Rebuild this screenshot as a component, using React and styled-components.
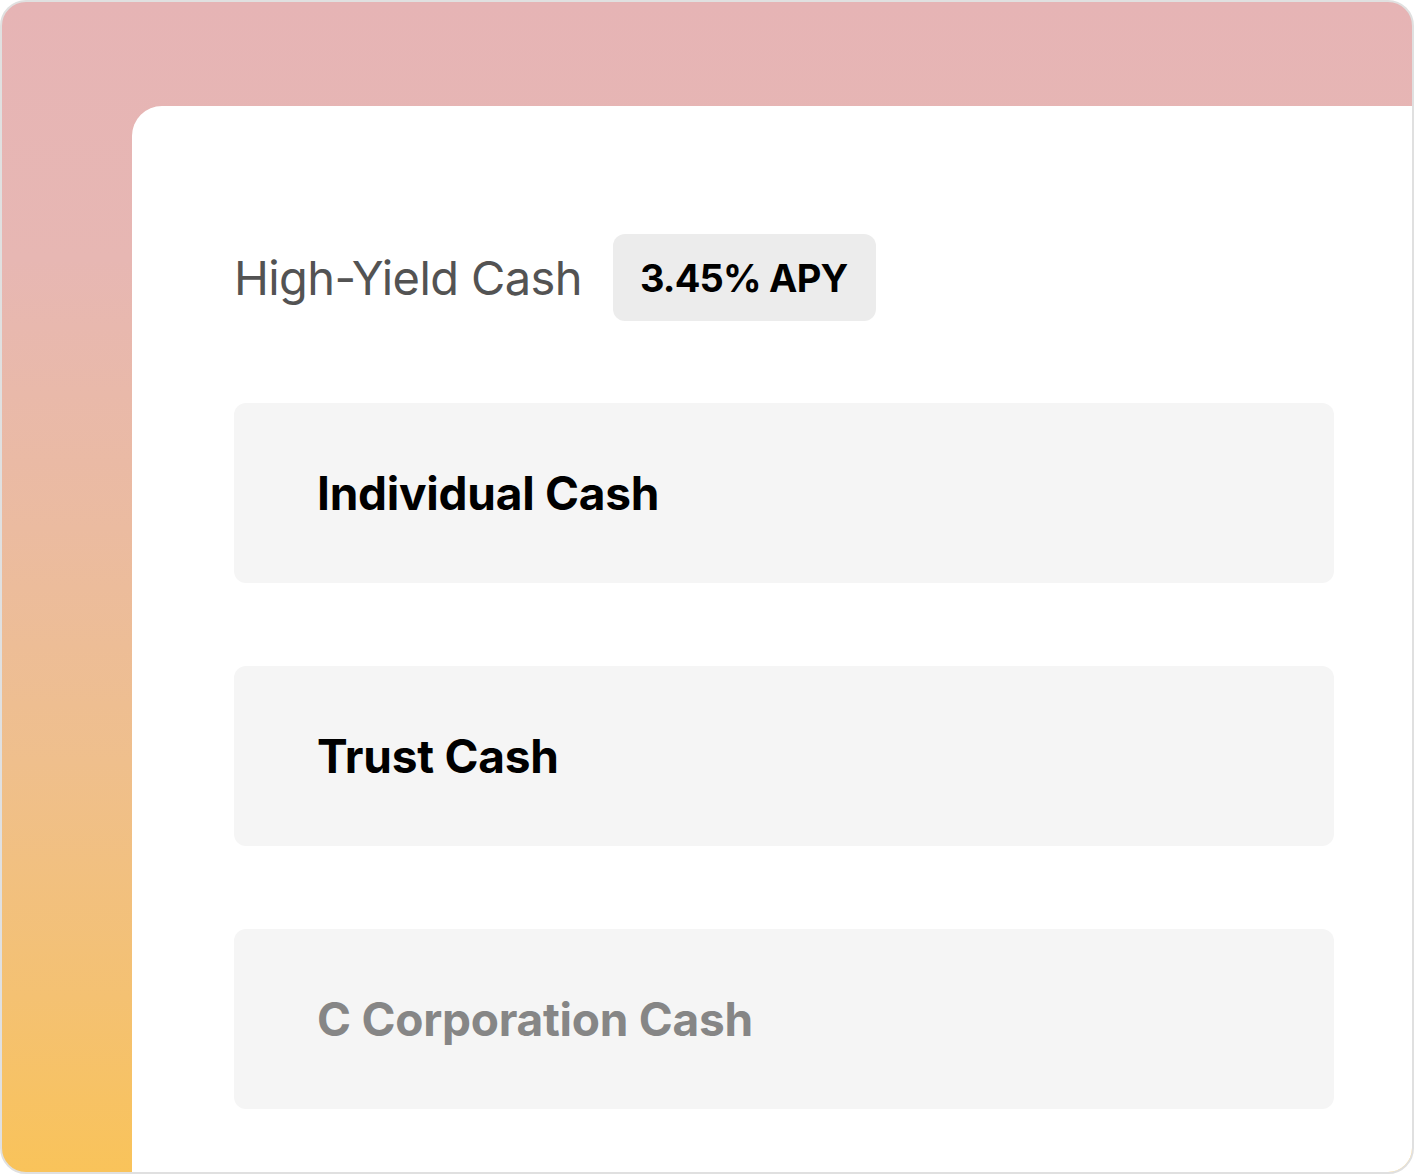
import React from "react";
import styled, { createGlobalStyle } from "styled-components";

const Global = createGlobalStyle`
  html, body { margin: 0; padding: 0; background: #ffffff; }
  body { font-family: Inter, "Noto Sans", "Liberation Sans", sans-serif; }
  * { box-sizing: border-box; }
`;

const Frame = styled.div`
  width: 1414px;
  height: 1174px;
  border: 2px solid #e0e0e0;
  border-radius: 26px;
  overflow: hidden;
  display: flex;
  padding: 104px 0 0 130px;
  background: linear-gradient(
    to bottom,
    #e6b4b5 0%,
    #e7b7b3 22%,
    #ebbba0 45%,
    #efbf8c 65%,
    #f4c172 85%,
    #f9c35a 100%
  );
`;

const Card = styled.div`
  flex: 1;
  background: #ffffff;
  border-top-left-radius: 30px;
  padding: 128px 0 0 102px;
  display: flex;
  flex-direction: column;
`;

const Header = styled.div`
  display: flex;
  align-items: center;
  gap: 31px;
  height: 87px;
`;

const Title = styled.h1`
  margin: 0;
  font-size: 47px;
  font-weight: 400;
  letter-spacing: -0.6px;
  color: #535353;
`;

const Badge = styled.div`
  height: 87px;
  padding: 0 29px 0 27px;
  display: flex;
  align-items: center;
  border-radius: 12px;
  background: #ececec;
  font-size: 38px;
  font-weight: 700;
  letter-spacing: -0.8px;
  color: #000000;
`;

const List = styled.div`
  margin-top: 82px;
  display: flex;
  flex-direction: column;
  gap: 83px;
  width: 1100px;
`;

const Row = styled.div`
  height: 180px;
  border-radius: 12px;
  background: #f5f5f5;
  display: flex;
  align-items: center;
  padding-left: 83px;
  font-size: 46px;
  font-weight: 700;
  letter-spacing: -0.25px;
  color: ${(p) => (p.$muted ? "#868686" : "#000000")};
`;

export default function App() {
  return (
    <>
      <Global />
      <Frame>
        <Card>
          <Header>
            <Title>High-Yield Cash</Title>
            <Badge>3.45% APY</Badge>
          </Header>
          <List>
            <Row>Individual Cash</Row>
            <Row>Trust Cash</Row>
            <Row $muted>C Corporation Cash</Row>
          </List>
        </Card>
      </Frame>
    </>
  );
}
